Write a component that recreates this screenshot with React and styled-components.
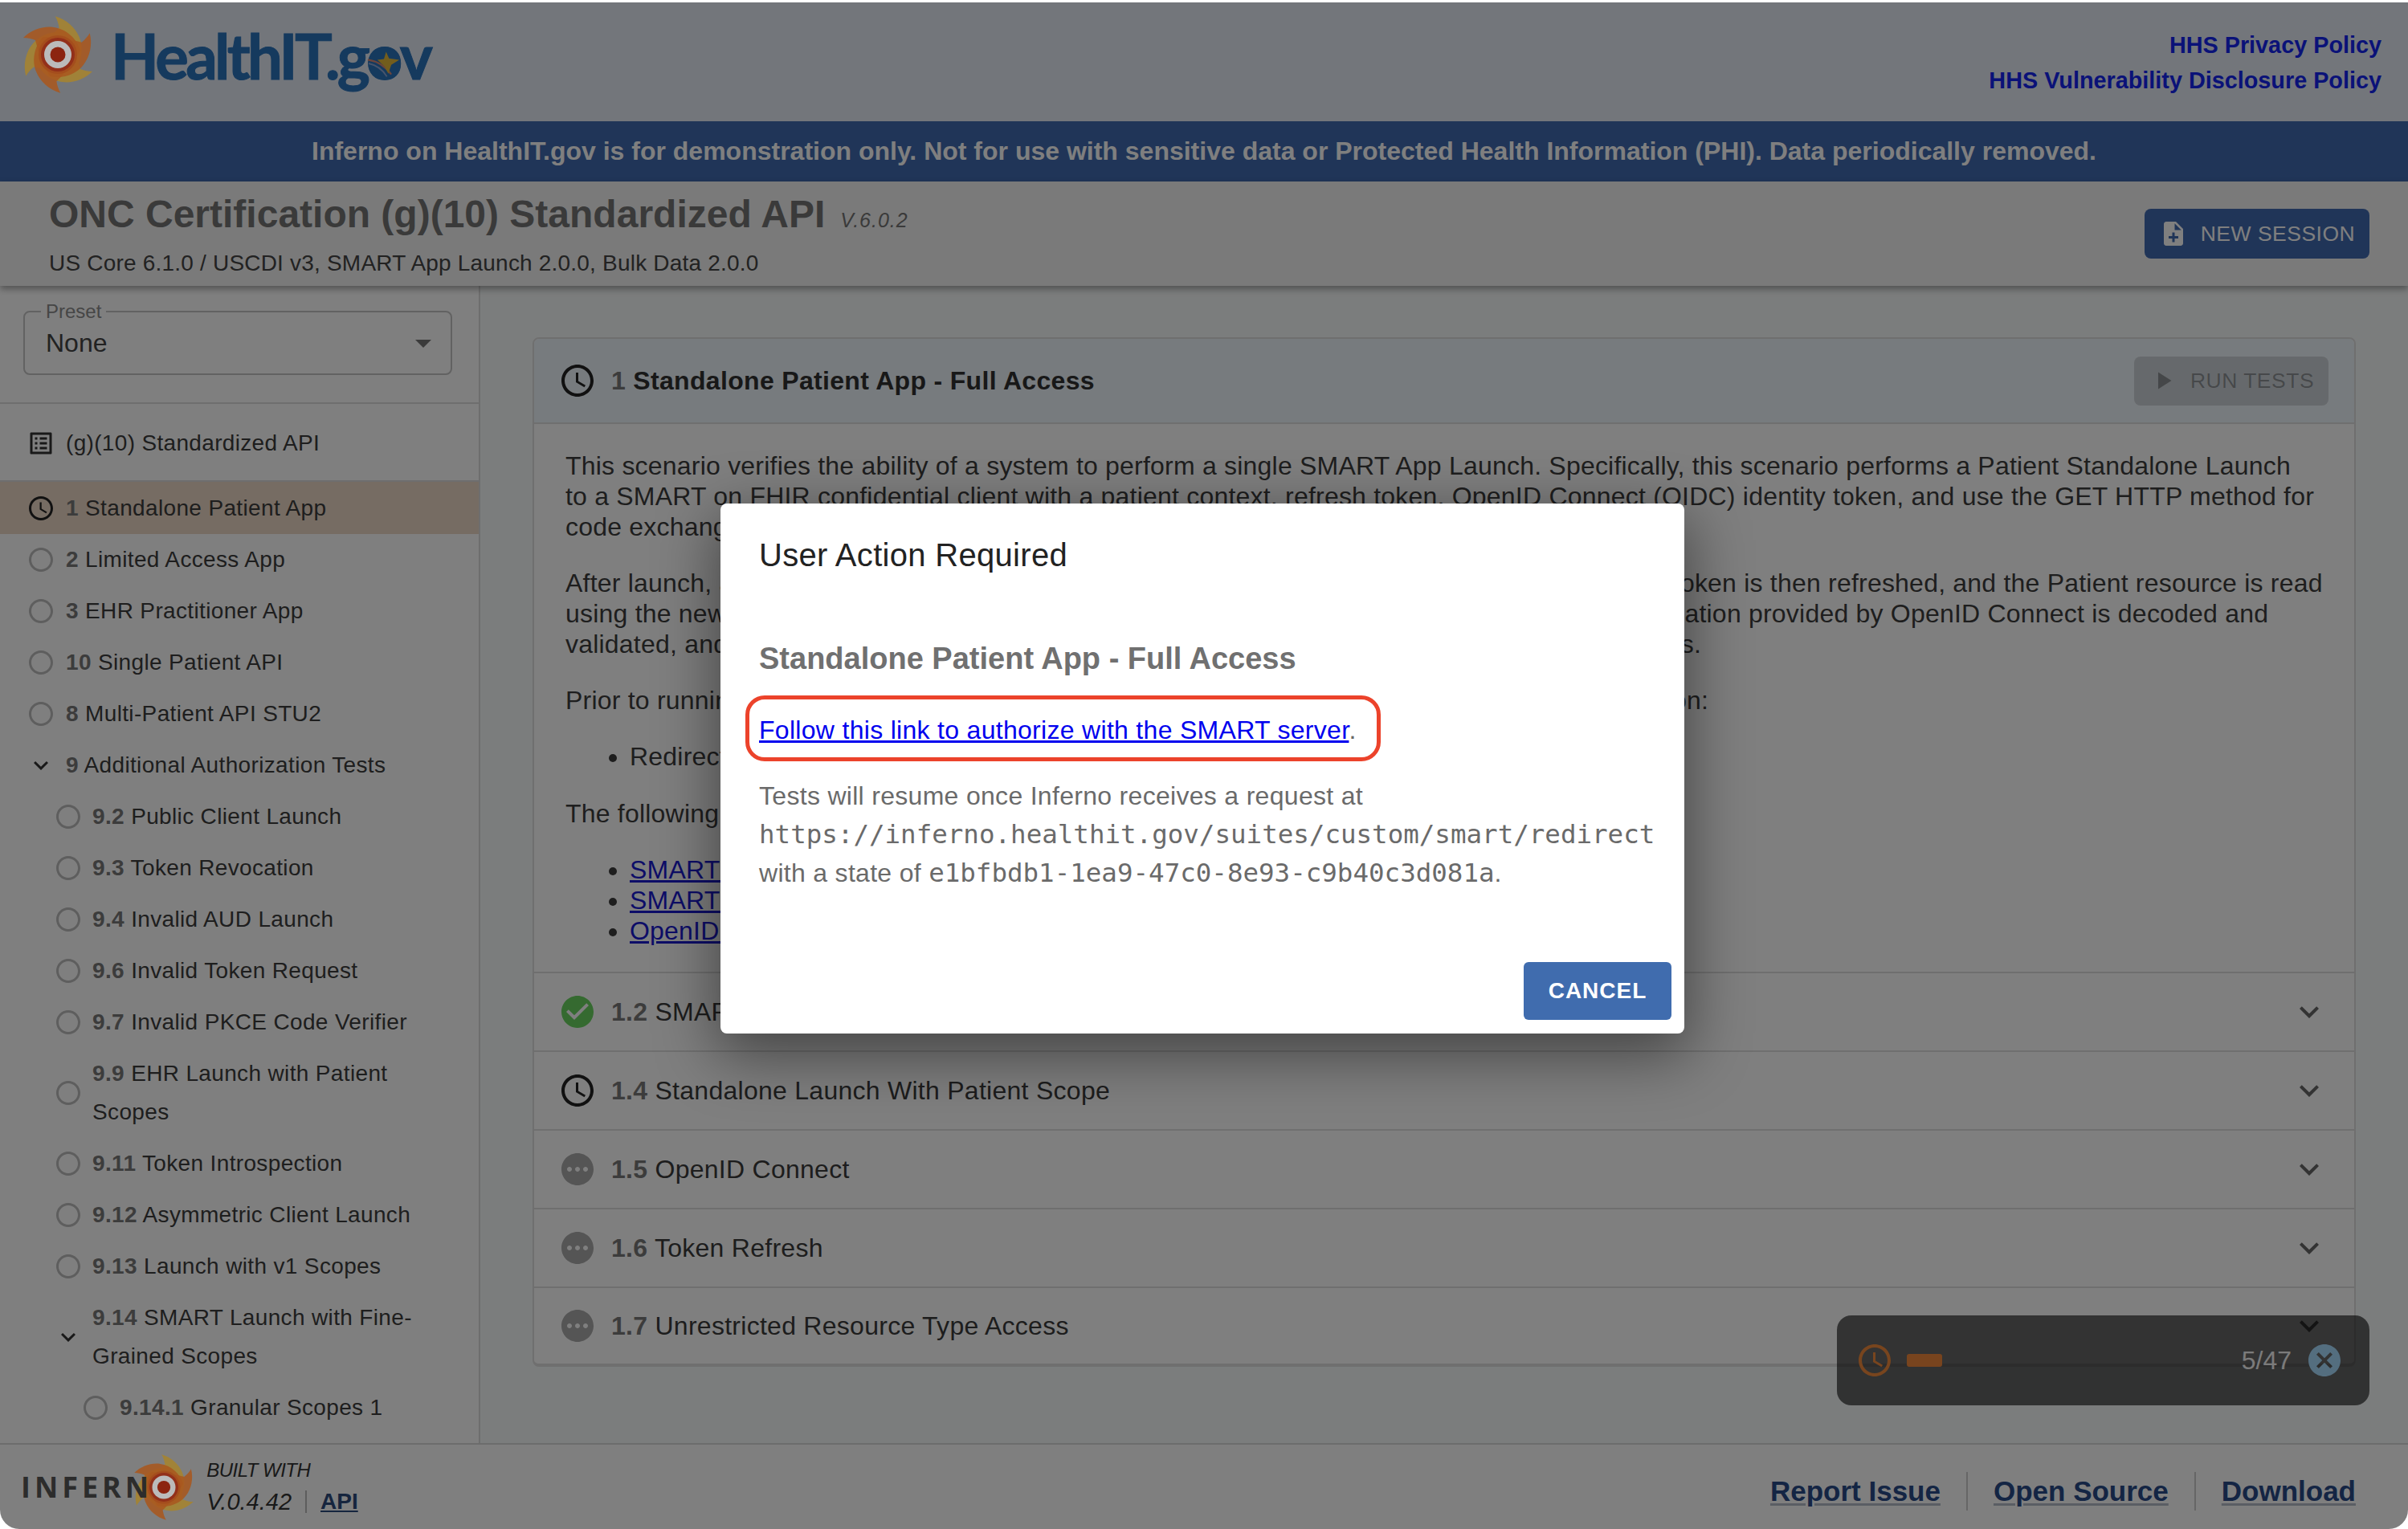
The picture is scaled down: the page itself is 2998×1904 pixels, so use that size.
import React from 'react';
import styled, { createGlobalStyle } from 'styled-components';
import {
  MdAccessTime,
  MdCancel,
  MdCheckCircle,
  MdExpandMore,
  MdListAlt,
  MdNoteAdd,
  MdPending,
  MdPlayArrow,
  MdRadioButtonUnchecked,
} from 'react-icons/md';

const GlobalStyle = createGlobalStyle`
  html, body {
    margin: 0;
    background: #fff;
  }
  body {
    padding-top: 3px;
    font-family: "Liberation Sans", Arial, sans-serif;
  }
  * {
    box-sizing: border-box;
  }
`;

const Page = styled.div`
  position: relative;
  height: 1901px;
  overflow: hidden;
  display: flex;
  flex-direction: column;
  background: #fff;
  border-radius: 0 0 24px 24px;
`;

const Header = styled.header`
  flex: none;
  height: 148px;
  display: flex;
  align-items: flex-start;
  justify-content: space-between;
  padding: 17px 33px 0 24px;
  background: #e6ecf6;
`;

const Brand = styled.div`
  display: flex;
  align-items: flex-start;
`;

const SwirlSvg = styled.svg`
  position: relative;
  z-index: 20;
  flex: none;
  display: block;
`;

const BrandWord = styled.div`
  margin: 5px 0 0 18px;
  font-family: "Lato", sans-serif;
  font-weight: 700;
  font-size: 78px;
  line-height: 88px;
  letter-spacing: -3.7px;
  color: #2b74bc;
  -webkit-text-stroke: 1px #2b74bc;
`;

const StarLetter = styled.span`
  position: relative;
`;

const StarBadge = styled.svg`
  position: absolute;
  left: 1px;
  top: 37px;
  width: 40px;
  height: 40px;
  overflow: visible;
`;

const PolicyLinks = styled.nav`
  display: flex;
  flex-direction: column;
  align-items: flex-end;
  padding-top: 18px;
  gap: 8px;
`;

const PolicyLink = styled.a`
  font-weight: 700;
  font-size: 28.8px;
  line-height: 36px;
  color: #1424f0;
`;

const Banner = styled.div`
  flex: none;
  height: 75px;
  display: flex;
  align-items: center;
  justify-content: center;
  background: #406ab0;
  color: #fff;
  font-weight: 700;
  font-size: 32px;
`;

const TitleBar = styled.div`
  position: relative;
  z-index: 2;
  flex: none;
  height: 130px;
  display: flex;
  align-items: center;
  justify-content: space-between;
  padding: 0 48px 0 61px;
  background: #f4f4f4;
  box-shadow: 0 4px 8px rgba(0, 0, 0, 0.35);
`;

const TitleGroup = styled.div`
  display: flex;
  flex-direction: column;
  gap: 16px;
  margin-top: 2px;
`;

const TitleLine = styled.div`
  display: flex;
  align-items: baseline;
  gap: 19px;
`;

const Title = styled.h1`
  margin: 0;
  font-size: 48px;
  line-height: 56px;
  font-weight: 700;
  color: #757575;
`;

const Version = styled.span`
  font-style: italic;
  font-size: 25px;
  letter-spacing: 1px;
  color: #757575;
`;

const Subtitle = styled.div`
  font-size: 28px;
  line-height: 34px;
  letter-spacing: 0.2px;
  color: #444;
`;

const PrimaryButton = styled.button`
  height: 62px;
  width: 280px;
  border: 0;
  border-radius: 8px;
  display: flex;
  align-items: center;
  justify-content: center;
  gap: 16px;
  background: #406ab0;
  color: #fff;
  font: 400 26.5px "Liberation Sans", sans-serif;
  letter-spacing: 0.5px;
`;

const Body = styled.div`
  flex: 1;
  min-height: 0;
  display: flex;
`;

const Sidebar = styled.aside`
  flex: none;
  width: 598px;
  border-right: 2px solid #ddd;
  overflow: hidden;
  background: #fff;
`;

const PresetArea = styled.div`
  padding: 20px 33px 34px 29px;
  border-bottom: 2px solid #ddd;
`;

const PresetField = styled.fieldset`
  margin: 0;
  height: 91px;
  padding: 0 26px;
  border: 2px solid #c4c4c4;
  border-radius: 8px;
  display: flex;
  align-items: center;
  justify-content: space-between;
`;

const PresetLegend = styled.legend`
  margin-left: -6px;
  padding: 0 6px;
  font-size: 24px;
  line-height: 24px;
  color: #8c8c8c;
`;

const PresetValue = styled.div`
  display: flex;
  width: 100%;
  align-items: center;
  justify-content: space-between;
  margin-top: -10px;
  font-size: 32px;
  color: #444;
`;

const Caret = styled.span`
  width: 0;
  height: 0;
  border-left: 10px solid transparent;
  border-right: 10px solid transparent;
  border-top: 10px solid #777;
  margin-right: -2px;
`;

const SuiteRow = styled.div`
  height: 97px;
  display: flex;
  align-items: center;
  gap: 13px;
  padding: 2px 0 0 33px;
  font-size: 28px;
  letter-spacing: 0.33px;
  color: #3c3c3c;
  border-bottom: 2px solid #ddd;
`;

const NavRow = styled.div`
  display: flex;
  align-items: center;
  gap: ${(p) => (p.$level ? 12 : 13)}px;
  min-height: 64px;
  padding: ${(p) => (p.$selected ? '9px' : '8px')} 40px 8px ${(p) => 33 + p.$level * 34}px;
  background: ${(p) => (p.$selected ? '#ecd8c6' : 'transparent')};
  font-size: 28px;
  line-height: 48px;
  letter-spacing: 0.35px;
  color: #3c3c3c;
`;

const NavText = styled.div`
  min-width: 0;
`;

const Num = styled.b`
  color: #787878;
`;

const NavIcon = styled.span`
  flex: none;
  display: flex;
  width: 36px;
  height: 36px;
  font-size: 36px;
  color: ${(p) => p.$color};
`;

const Main = styled.main`
  flex: 1;
  min-width: 0;
  padding: 64px 65px 0 65px;
  background: #f7fafa;
`;

const Panel = styled.section`
  border: 2px solid #dedede;
  border-bottom-width: 4px;
  border-radius: 8px;
  background: #fff;
  overflow: hidden;
`;

const PanelHead = styled.div`
  height: 106px;
  display: flex;
  align-items: center;
  justify-content: space-between;
  padding: 0 32px 0 30px;
  background: #eff6fc;
  border-bottom: 2px solid #dedede;
`;

const HeadTitle = styled.div`
  display: flex;
  align-items: center;
  gap: 18px;
  font-weight: 700;
  font-size: 32px;
  letter-spacing: 0.32px;
  color: #303030;
`;

const RowIcon = styled.span`
  flex: none;
  display: flex;
  font-size: 48px;
  color: ${(p) => p.$color};
`;

const DisabledButton = styled.div`
  width: 242px;
  height: 61px;
  border-radius: 8px;
  display: flex;
  align-items: center;
  justify-content: center;
  gap: 16px;
  background: rgba(0, 0, 0, 0.14);
  color: rgba(0, 0, 0, 0.32);
  font-size: 26.5px;
  letter-spacing: 0.5px;
`;

const Description = styled.div`
  padding: 33px 30px 32px 39px;
  font-size: 32px;
  line-height: 38px;
  letter-spacing: 0.21px;
  color: #3c3c3c;
`;

const Para = styled.p`
  margin: 0 0 32px;
`;

const Bullets = styled.ul`
  margin: 0 0 33px;
  padding-left: 80px;
  &:last-child {
    margin-bottom: 0;
  }
  a {
    color: #1a1ad0;
  }
`;

const TestRow = styled.div`
  height: 98px;
  display: flex;
  align-items: center;
  justify-content: space-between;
  padding: 0 32px 0 30px;
  border-top: 2px solid #dedede;
  font-size: 32px;
  letter-spacing: 0.27px;
  color: #3a3a3a;
  &:last-child {
    height: 96px;
  }
`;

const RowLabel = styled.div`
  display: flex;
  align-items: center;
  gap: 18px;
`;

const RowNum = styled.b`
  color: #787878;
`;

const Chevron = styled(MdExpandMore)`
  font-size: 48px;
  color: #666;
`;

const Footer = styled.footer`
  flex: none;
  height: 107px;
  display: flex;
  align-items: center;
  justify-content: space-between;
  padding: 0 65px 0 26px;
  border-top: 2px solid #d8d8d8;
  background: #fff;
`;

const FooterBrand = styled.div`
  display: flex;
  align-items: center;
`;

// sits on top of the swirl's left blade, above the dimmed layer like the swirl
const InfernoWord = styled.span`
  position: relative;
  z-index: 21;
  font-family: "Open Sans", sans-serif;
  font-weight: 700;
  font-size: 36px;
  letter-spacing: 5px;
  color: #2c2c2c;
`;

const BuiltWith = styled.div`
  margin-left: 12px;
  display: flex;
  flex-direction: column;
  gap: 6px;
  font-style: italic;
  color: #333;
`;

const BuiltLabel = styled.div`
  font-size: 24px;
  line-height: 30px;
  letter-spacing: -0.5px;
`;

const VersionRow = styled.div`
  display: flex;
  align-items: center;
  font-size: 29px;
  line-height: 36px;
`;

const ApiLink = styled.a`
  margin-left: 17px;
  padding-left: 17px;
  border-left: 2px solid #bbb;
  font-style: normal;
  font-size: 28px;
  font-weight: 700;
  line-height: 28px;
  color: #2c4a7c;
  text-decoration: underline;
`;

const FooterLinks = styled.nav`
  display: flex;
  align-items: center;
  margin-top: 10px;
`;

const FooterLink = styled.a`
  font-weight: 700;
  font-size: 35px;
  line-height: 48px;
  color: #284a88;
  text-decoration: underline;
  text-decoration-thickness: 3px;
  text-decoration-color: #b4bcc8;
  text-underline-offset: 3px;
  & + & {
    margin-left: 32px;
    padding-left: 32px;
    border-left: 2px solid #ccc;
  }
`;

const Timer = styled.div`
  position: absolute;
  left: 2287px;
  top: 1635px;
  width: 663px;
  height: 112px;
  padding: 0 32px 0 23px;
  display: flex;
  align-items: center;
  border-radius: 18px;
  background: rgba(0, 0, 0, 0.6);
`;

const TimerClock = styled(MdAccessTime)`
  flex: none;
  font-size: 48px;
  color: #f08a3c;
`;

const TimerTrack = styled.div`
  flex: 1;
  margin-left: 16px;
  height: 16px;
`;

const TimerFill = styled.div`
  height: 100%;
  border-radius: 3px;
  background: #f0883c;
`;

const TimerCount = styled.span`
  font-size: 32px;
  color: #fff;
  opacity: 0.95;
`;

const TimerClose = styled(MdCancel)`
  flex: none;
  margin-left: 17px;
  font-size: 48px;
  color: #a8dcff;
`;

const Backdrop = styled.div`
  position: absolute;
  inset: 0;
  z-index: 10;
  display: flex;
  align-items: center;
  justify-content: center;
  background: rgba(0, 0, 0, 0.5);
`;

const Modal = styled.div`
  width: 1200px;
  height: 660px;
  margin: 6px 4px 0 0;
  padding: 32px 16px 17px 48px;
  display: flex;
  flex-direction: column;
  border-radius: 8px;
  background: #fff;
  box-shadow: 0 22px 76px 6px rgba(0, 0, 0, 0.45);
`;

const ModalTitle = styled.h2`
  margin: 0;
  font-size: 40px;
  line-height: 64px;
  font-weight: 400;
  letter-spacing: 0.3px;
  color: #222;
`;

const ModalHeading = styled.h3`
  margin: 73px 0 0;
  font-size: 38px;
  line-height: 48px;
  font-weight: 700;
  color: #707070;
`;

const LinkBox = styled.div`
  align-self: flex-start;
  width: 791px;
  height: 82px;
  margin: 22px 0 0 -17px;
  padding: 14px 12px;
  border: 5px solid #ec432b;
  border-radius: 24px;
  font-size: 32px;
  line-height: 48px;
  letter-spacing: 0.3px;
  color: #666;
  a {
    color: #0000ee;
    text-decoration: underline;
  }
`;

const ModalText = styled.div`
  margin-top: 19px;
  font-size: 32px;
  line-height: 48px;
  letter-spacing: 0.3px;
  color: #6a6a6a;
`;

const Mono = styled.span`
  font-family: "DejaVu Sans Mono", "Liberation Mono", monospace;
  font-size: 32.5px;
  letter-spacing: 0;
`;

const CancelButton = styled.button`
  align-self: flex-end;
  margin-top: auto;
  width: 184px;
  height: 72px;
  border: 0;
  border-radius: 6px;
  background: #406cae;
  color: #fff;
  font: 700 28px "Liberation Sans", sans-serif;
  letter-spacing: 1px;
`;

// six overlapping blades around the ring; the same mark is used top and bottom
const Swirl = ({ size, style }) => (
  <SwirlSvg width={size} height={size} viewBox="-48 -48 96 96" style={style}>
    {[60, 180, 300, 0, 120, 240].map((angle) => (
      <path
        key={angle}
        transform={`rotate(${angle})`}
        d="M-43 -21C-33 -31 -18 -36 -5 -34C10 -32 24 -20 28 -5C20 12 -5 15 -18 5C-24 -3 -26 -10 -28 -18C-33 -20 -38 -21 -43 -21Z"
        fill={angle % 120 ? '#a6842f' : '#a8581f'}
        fillOpacity="0.88"
      />
    ))}
    <circle r="24" fill="#a3481c" fillOpacity="0.7" />
    <circle r="21" fill="#93301a" />
    <circle r="17" fill="#bbb" />
    <circle r="9.5" fill="#8c2410" />
  </SwirlSvg>
);

const statusIcon = {
  open: <MdRadioButtonUnchecked />,
  clock: <MdAccessTime />,
  caret: <MdExpandMore />,
};

const statusColor = { open: '#bcbcbc', clock: '#222', caret: '#333' };

const navItems = [
  { num: '1', label: 'Standalone Patient App', kind: 'clock', level: 0, selected: true },
  { num: '2', label: 'Limited Access App', kind: 'open', level: 0 },
  { num: '3', label: 'EHR Practitioner App', kind: 'open', level: 0 },
  { num: '10', label: 'Single Patient API', kind: 'open', level: 0 },
  { num: '8', label: 'Multi-Patient API STU2', kind: 'open', level: 0 },
  { num: '9', label: 'Additional Authorization Tests', kind: 'caret', level: 0 },
  { num: '9.2', label: 'Public Client Launch', kind: 'open', level: 1 },
  { num: '9.3', label: 'Token Revocation', kind: 'open', level: 1 },
  { num: '9.4', label: 'Invalid AUD Launch', kind: 'open', level: 1 },
  { num: '9.6', label: 'Invalid Token Request', kind: 'open', level: 1 },
  { num: '9.7', label: 'Invalid PKCE Code Verifier', kind: 'open', level: 1 },
  { num: '9.9', label: 'EHR Launch with Patient Scopes', kind: 'open', level: 1 },
  { num: '9.11', label: 'Token Introspection', kind: 'open', level: 1 },
  { num: '9.12', label: 'Asymmetric Client Launch', kind: 'open', level: 1 },
  { num: '9.13', label: 'Launch with v1 Scopes', kind: 'open', level: 1 },
  { num: '9.14', label: 'SMART Launch with Fine-Grained Scopes', kind: 'caret', level: 1 },
  { num: '9.14.1', label: 'Granular Scopes 1', kind: 'open', level: 2 },
];

const testRows = [
  { num: '1.2', label: 'SMART on FHIR Discovery', icon: <MdCheckCircle />, color: '#6ad460' },
  { num: '1.4', label: 'Standalone Launch With Patient Scope', icon: <MdAccessTime />, color: '#222' },
  { num: '1.5', label: 'OpenID Connect', icon: <MdPending />, color: '#aaa' },
  { num: '1.6', label: 'Token Refresh', icon: <MdPending />, color: '#aaa' },
  { num: '1.7', label: 'Unrestricted Resource Type Access', icon: <MdPending />, color: '#aaa' },
];

const App = () => {
  const completed = 5 / 47;

  return (
    <Page>
      <GlobalStyle />
      <Header>
        <Brand>
          <Swirl size={96} />
          <BrandWord>
            HealthIT.g
            <StarLetter>
              o
              <StarBadge viewBox="0 0 44 44">
                <circle cx="22" cy="22" r="22" fill="#2b74bc" />
                <path d="M0 17C13 19 24 26 32 37" fill="none" stroke="#d88a78" strokeWidth="2.5" />
                <path d="M1 22C11 24 20 30 26 40" fill="none" stroke="#8fa8d8" strokeWidth="2" />
                <path
                  d="M25 6L29 15L43 17L32 24L28 36L23 26L13 17L22 16Z"
                  fill="#e4bb3a"
                  stroke="none"
                />
              </StarBadge>
            </StarLetter>
            v
          </BrandWord>
        </Brand>
        <PolicyLinks>
          <PolicyLink>HHS Privacy Policy</PolicyLink>
          <PolicyLink>HHS Vulnerability Disclosure Policy</PolicyLink>
        </PolicyLinks>
      </Header>

      <Banner>
        Inferno on HealthIT.gov is for demonstration only. Not for use with sensitive data or
        Protected Health Information (PHI). Data periodically removed.
      </Banner>

      <TitleBar>
        <TitleGroup>
          <TitleLine>
            <Title>ONC Certification (g)(10) Standardized API</Title>
            <Version>V.6.0.2</Version>
          </TitleLine>
          <Subtitle>US Core 6.1.0 / USCDI v3, SMART App Launch 2.0.0, Bulk Data 2.0.0</Subtitle>
        </TitleGroup>
        <PrimaryButton>
          <MdNoteAdd size={36} />
          NEW SESSION
        </PrimaryButton>
      </TitleBar>

      <Body>
        <Sidebar>
          <PresetArea>
            <PresetField>
              <PresetLegend>Preset</PresetLegend>
              <PresetValue>
                None
                <Caret />
              </PresetValue>
            </PresetField>
          </PresetArea>
          <SuiteRow>
            <NavIcon $color="#333">
              <MdListAlt />
            </NavIcon>
            (g)(10) Standardized API
          </SuiteRow>
          {navItems.map((item) => (
            <NavRow key={item.num} $level={item.level} $selected={item.selected}>
              <NavIcon $color={statusColor[item.kind]}>{statusIcon[item.kind]}</NavIcon>
              <NavText>
                <Num>{item.num}</Num> {item.label}
              </NavText>
            </NavRow>
          ))}
        </Sidebar>

        <Main>
          <Panel>
            <PanelHead>
              <HeadTitle>
                <RowIcon $color="#222">
                  <MdAccessTime />
                </RowIcon>
                <span>
                  <RowNum>1</RowNum> Standalone Patient App - Full Access
                </span>
              </HeadTitle>
              <DisabledButton>
                <MdPlayArrow size={36} />
                RUN TESTS
              </DisabledButton>
            </PanelHead>
            <Description>
              <Para>
                This scenario verifies the ability of a system to perform a single SMART App Launch.
                Specifically, this scenario performs a Patient Standalone Launch
                <br />
                to a SMART on FHIR confidential client with a patient context, refresh token, OpenID
                Connect (OIDC) identity token, and use the GET HTTP method for
                <br />
                code exchange.
              </Para>
              <Para>
                After launch, a single Patient resource read is performed on the patient id provided.
                The access token is then refreshed, and the Patient resource is read
                <br />
                using the new access token to ensure that the refresh token is valid. The id token and
                its configuration provided by OpenID Connect is decoded and
                <br />
                validated, and the claims in the returned id token are then checked for all of the
                required elements.
              </Para>
              <Para>
                Prior to running this scenario, register the client with an EHR server using the
                following information:
              </Para>
              <Bullets>
                <li>Redirect URI: https://inferno.healthit.gov/suites/custom/smart/redirect</li>
              </Bullets>
              <Para>The following implementation specifications are relevant to this scenario:</Para>
              <Bullets>
                <li>
                  <a href="#launch">SMART on FHIR (STU1)</a>
                </li>
                <li>
                  <a href="#launch">SMART on FHIR (STU2)</a>
                </li>
                <li>
                  <a href="#oidc">OpenID Connect Core 1.0</a>
                </li>
              </Bullets>
            </Description>
            {testRows.map((row) => (
              <TestRow key={row.num}>
                <RowLabel>
                  <RowIcon $color={row.color}>{row.icon}</RowIcon>
                  <span>
                    <RowNum>{row.num}</RowNum> {row.label}
                  </span>
                </RowLabel>
                <Chevron />
              </TestRow>
            ))}
          </Panel>
        </Main>
      </Body>

      <Footer>
        <FooterBrand>
          <InfernoWord>INFERN</InfernoWord>
          <Swirl size={82} style={{ marginLeft: '-27px' }} />
          <BuiltWith>
            <BuiltLabel>BUILT WITH</BuiltLabel>
            <VersionRow>
              V.0.4.42
              <ApiLink>API</ApiLink>
            </VersionRow>
          </BuiltWith>
        </FooterBrand>
        <FooterLinks>
          <FooterLink>Report Issue</FooterLink>
          <FooterLink>Open Source</FooterLink>
          <FooterLink>Download</FooterLink>
        </FooterLinks>
      </Footer>

      <Timer>
        <TimerClock />
        <TimerTrack>
          <TimerFill style={{ width: `${completed * 100}%` }} />
        </TimerTrack>
        <TimerCount>5/47</TimerCount>
        <TimerClose />
      </Timer>

      <Backdrop>
        <Modal>
          <ModalTitle>User Action Required</ModalTitle>
          <ModalHeading>Standalone Patient App - Full Access</ModalHeading>
          <LinkBox>
            <a href="#authorize">Follow this link to authorize with the SMART server</a>.
          </LinkBox>
          <ModalText>
            Tests will resume once Inferno receives a request at
            <br />
            <Mono>https://inferno.healthit.gov/suites/custom/smart/redirect</Mono>
            <br />
            with a state of <Mono>e1bfbdb1-1ea9-47c0-8e93-c9b40c3d081a</Mono>.
          </ModalText>
          <CancelButton>CANCEL</CancelButton>
        </Modal>
      </Backdrop>
    </Page>
  );
};

export default App;
